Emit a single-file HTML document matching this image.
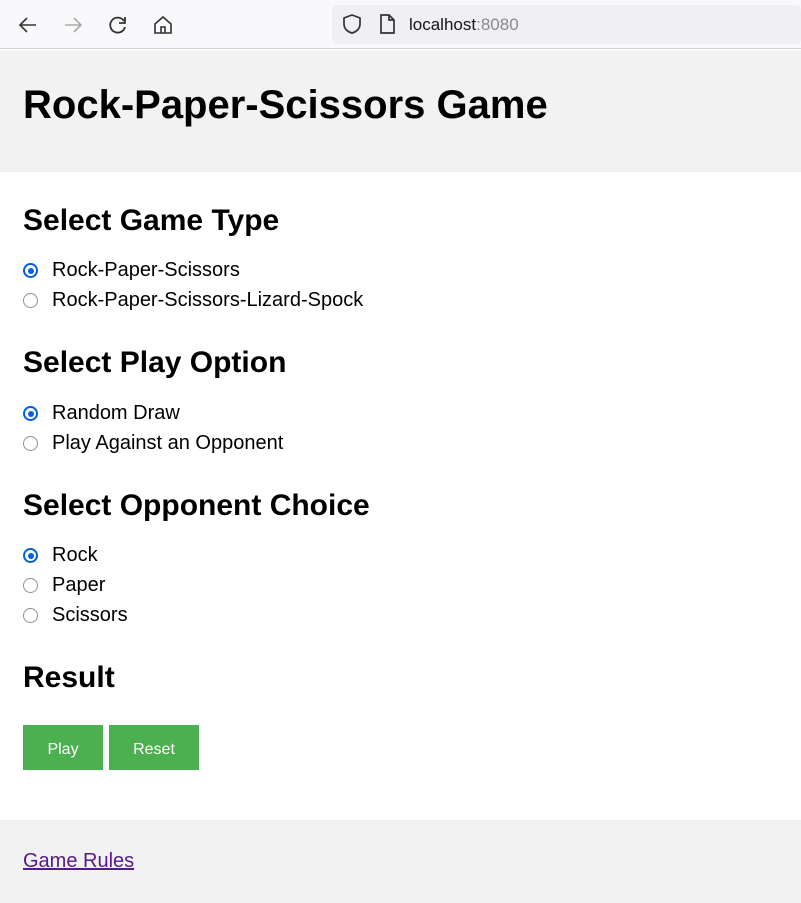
<!DOCTYPE html>
<html><head><meta charset="utf-8"><style>
*{margin:0;padding:0;box-sizing:border-box}
body{width:801px;height:903px;overflow:hidden;background:#fff;font-family:"Liberation Sans",Arial,sans-serif;position:relative;color:#000}
.a{position:absolute;white-space:nowrap}
.bar{position:absolute;left:0;top:0;width:801px;height:49px;background:#f9f9fb;border-bottom:1px solid #cfcfd8}
.url{position:absolute;left:332px;top:5px;width:469px;height:39px;background:#f0f0f4;border-radius:5px}
h1{position:absolute;left:23px;top:83px;font-size:40px;font-weight:bold}
h2{position:absolute;left:23px;font-size:30px;font-weight:bold}
.r{position:absolute;left:23px;font-size:20px;line-height:22px}
.r i{position:absolute;left:0px;top:4px;width:15px;height:15px;border-radius:50%;border:1.5px solid #8f8f9d;background:#fff}
.r i.on{border:2px solid #0060df}
.r i.on:after{content:"";position:absolute;left:2.5px;top:2.5px;width:6px;height:6px;border-radius:50%;background:#0060df}
.r span{margin-left:29px}
.btn{position:absolute;top:725px;height:45px;background:#4caf50;color:#fff;font-size:16px;text-align:center;line-height:49px}
</style></head><body>
<div class="bar">
<svg class="a" style="left:17px;top:14px" width="22" height="22" viewBox="0 0 22 22"><path d="M19 11H4M10 4L3 11l7 7" fill="none" stroke="#333" stroke-width="1.6"/></svg>
<svg class="a" style="left:62px;top:14px" width="22" height="22" viewBox="0 0 22 22"><path d="M3 11h15M12 4l7 7-7 7" fill="none" stroke="#aaa" stroke-width="1.6"/></svg>
<svg class="a" style="left:107px;top:14px" width="22" height="22" viewBox="0 0 22 22"><path d="M17 7A7.5 7.5 0 1 0 18 13" fill="none" stroke="#333" stroke-width="1.8"/><path d="M18 3v6h-6" fill="none" stroke="#333" stroke-width="1.8"/></svg>
<svg class="a" style="left:152px;top:14px" width="22" height="22" viewBox="0 0 22 22"><path d="M3 10L11 3l8 7v9H3z M9 19v-6h4v6" fill="none" stroke="#333" stroke-width="1.6"/></svg>
<div class="url"></div>
<svg class="a" style="left:341px;top:13px" width="22" height="22" viewBox="0 0 22 22"><path d="M11 2L3 5v6c0 5 4 8 8 9 4-1 8-4 8-9V5z" fill="none" stroke="#333" stroke-width="1.7"/></svg>
<svg class="a" style="left:377px;top:13px" width="20" height="22" viewBox="0 0 20 22"><path d="M4 2h8l5 5v13H4z M12 2v5h5" fill="none" stroke="#333" stroke-width="1.7"/></svg>
<div class="a" style="left:409px;top:15px;font-size:17px;color:#15141a">localhost<span style="color:#8a8a8f">:8080</span></div>
</div>
<div class="a" style="left:0;top:50px;width:801px;height:122px;background:#f2f2f2"></div>
<h1>Rock-Paper-Scissors Game</h1>
<h2 style="top:204px">Select Game Type</h2>
<div class="r" style="top:259px"><i class="on"></i><span>Rock-Paper-Scissors</span></div>
<div class="r" style="top:289px"><i></i><span>Rock-Paper-Scissors-Lizard-Spock</span></div>
<h2 style="top:346px">Select Play Option</h2>
<div class="r" style="top:402px"><i class="on"></i><span>Random Draw</span></div>
<div class="r" style="top:432px"><i></i><span>Play Against an Opponent</span></div>
<h2 style="top:489px">Select Opponent Choice</h2>
<div class="r" style="top:544px"><i class="on"></i><span>Rock</span></div>
<div class="r" style="top:574px"><i></i><span>Paper</span></div>
<div class="r" style="top:604px"><i></i><span>Scissors</span></div>
<h2 style="top:661px">Result</h2>
<div class="btn" style="left:23px;width:80px">Play</div>
<div class="btn" style="left:109px;width:90px">Reset</div>
<div class="a" style="left:0;top:820px;width:801px;height:83px;background:#f2f2f2"></div>
<div class="a" style="left:23px;top:850px;font-size:20px;color:#551a8b;text-decoration:underline">Game Rules</div>
</body></html>
